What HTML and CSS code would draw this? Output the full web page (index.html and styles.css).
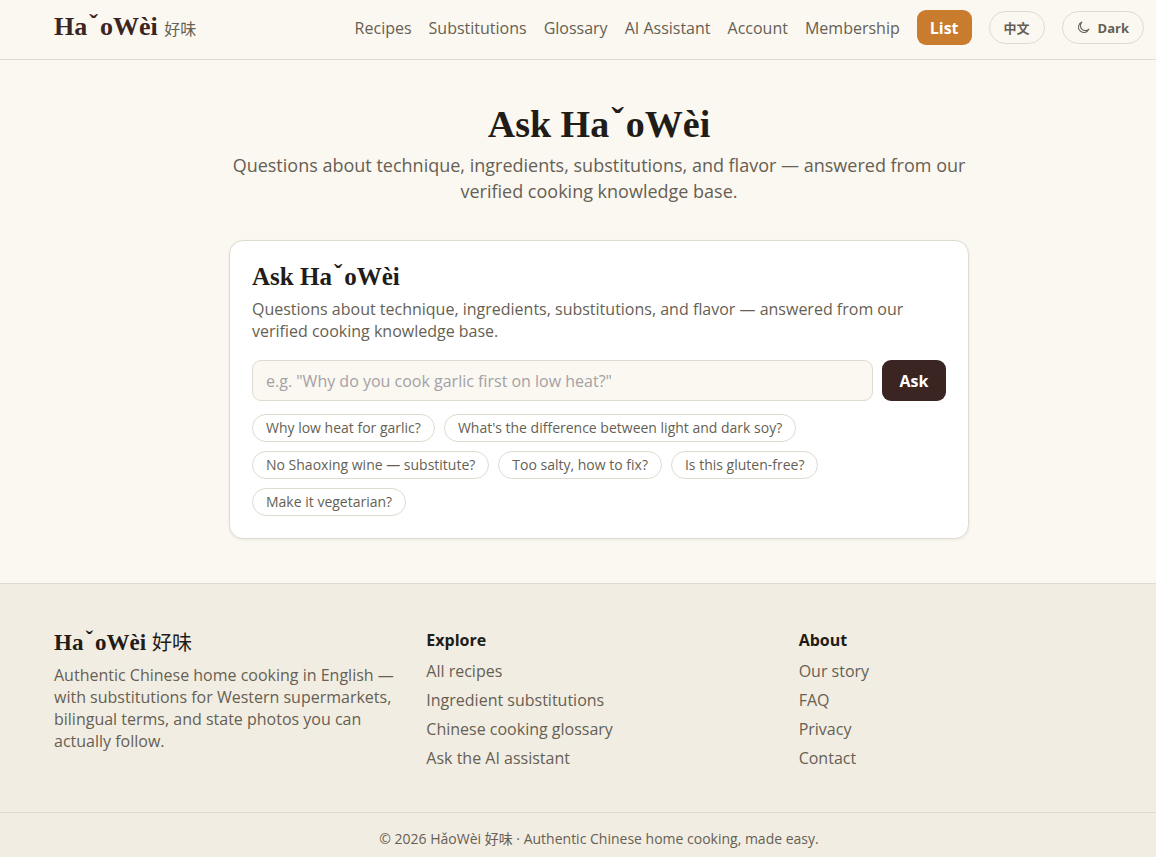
FILE: index.html
```html
<!DOCTYPE html>
<html lang="en">
<head>
  <meta charset="UTF-8" />
  <meta name="viewport" content="width=device-width, initial-scale=1" />
  <title>Ask HǎoWèi</title>
  <link rel="stylesheet" href="styles.css">
</head>
<body>
  <header class="site-header">
    <div class="container header-inner">
      <a class="brand" href="#">Ha<span class="caron">ˇ</span>oWèi <span class="brand-cn" lang="zh">好味</span></a>
      <nav class="nav">
        <a href="#">Recipes</a>
        <a href="#">Substitutions</a>
        <a href="#">Glossary</a>
        <a href="#">AI Assistant</a>
        <a href="#">Account</a>
        <a href="#">Membership</a>
        <a class="nav-list" href="#">List</a>
        <button class="pill-btn" type="button" lang="zh">中文</button>
        <button class="pill-btn" type="button">
          <svg class="moon" viewBox="0 0 24 24" aria-hidden="true"><path d="M22 15A10 10 0 1 1 9 2a8.5 8.5 0 0 0 13 13z"/></svg>
          Dark
        </button>
      </nav>
    </div>
  </header>

  <main class="container main">
    <div class="hero">
      <h1>Ask Ha<span class="caron">ˇ</span>oWèi</h1>
      <p>Questions about technique, ingredients, substitutions, and flavor — answered from our verified cooking knowledge base.</p>
    </div>

    <section class="card">
      <h2>Ask Ha<span class="caron">ˇ</span>oWèi</h2>
      <p class="card-lead">Questions about technique, ingredients, substitutions, and flavor — answered from our verified cooking knowledge base.</p>
      <form class="ask-form">
        <input class="ask-input" type="text" aria-label="Your question" placeholder='e.g. "Why do you cook garlic first on low heat?"' />
        <button class="ask-btn" type="submit">Ask</button>
      </form>
      <div class="chips">
        <button class="chip" type="button">Why low heat for garlic?</button>
        <button class="chip" type="button">What's the difference between light and dark soy?</button>
        <button class="chip" type="button">No Shaoxing wine — substitute?</button>
        <button class="chip" type="button">Too salty, how to fix?</button>
        <button class="chip" type="button">Is this gluten-free?</button>
        <button class="chip" type="button">Make it vegetarian?</button>
      </div>
    </section>
  </main>

  <footer class="site-footer">
    <div class="container footer-grid">
      <div>
        <h3 class="footer-brand">Ha<span class="caron">ˇ</span>oWèi <span class="footer-cn" lang="zh">好味</span></h3>
        <p class="footer-text">Authentic Chinese home cooking in English — with substitutions for Western supermarkets, bilingual terms, and state photos you can actually follow.</p>
      </div>
      <div>
        <h4>Explore</h4>
        <ul class="footer-links">
          <li><a href="#">All recipes</a></li>
          <li><a href="#">Ingredient substitutions</a></li>
          <li><a href="#">Chinese cooking glossary</a></li>
          <li><a href="#">Ask the AI assistant</a></li>
        </ul>
      </div>
      <div>
        <h4>About</h4>
        <ul class="footer-links">
          <li><a href="#">Our story</a></li>
          <li><a href="#">FAQ</a></li>
          <li><a href="#">Privacy</a></li>
          <li><a href="#">Contact</a></li>
        </ul>
      </div>
    </div>
    <div class="footer-bottom">
      <div class="container">© 2026 HǎoWèi <span lang="zh">好味</span> · Authentic Chinese home cooking, made easy.</div>
    </div>
  </footer>
</body>
</html>
```

FILE: styles.css
```css
:root {
  --bg: #fbf8f1;
  --bg-alt: #f2ede2;
  --border: #dedbd0;
  --text: #211c17;
  --muted: #665f54;
  --brand: #3b2523;
  --accent: #c97b2e;
  --sans: "Open Sans", "Noto Sans CJK SC", sans-serif;
  --serif: "Liberation Serif", "Noto Sans CJK SC", serif;
}
* {
  box-sizing: border-box;
  margin: 0;
  padding: 0;
}
body {
  font-family: var(--sans);
  font-size: 16px;
  line-height: 22px;
  color: var(--text);
  background-color: var(--bg);
}
a {
  color: inherit;
  text-decoration: none;
}
button,
input {
  font-family: inherit;
}
button {
  cursor: pointer;
}
h1,
h2,
h3 {
  font-family: var(--serif);
  font-weight: 700;
}
.container {
  padding-left: 54px;
  padding-right: 12px;
}
.caron {
  padding: 0 2px;
  line-height: 0;
  vertical-align: 3px;
}

/* Header */
.site-header {
  border-bottom: 1px solid var(--border);
}
.header-inner {
  display: flex;
  align-items: center;
  justify-content: space-between;
  height: 59px;
  padding-bottom: 4px;
}
.brand {
  font-family: var(--serif);
  font-size: 26px;
  font-weight: 700;
  line-height: 32px;
  color: var(--brand);
  white-space: nowrap;
}
.brand-cn {
  font-family: var(--sans);
  font-size: 16px;
  font-weight: 400;
  color: var(--muted);
}
.nav {
  display: flex;
  align-items: center;
  gap: 17px;
  color: var(--muted);
  white-space: nowrap;
}
.nav-list {
  padding: 7px 13px 6px;
  border-radius: 9px;
  background-color: var(--accent);
  color: #fff;
  font-weight: 700;
}
.pill-btn {
  display: flex;
  align-items: center;
  gap: 8px;
  height: 33px;
  padding: 0 14px;
  border: 1px solid var(--border);
  border-radius: 17px;
  background-color: transparent;
  color: var(--muted);
  font-size: 13px;
  font-weight: 700;
}
.moon {
  width: 13px;
  height: 13px;
  fill: none;
  stroke: currentColor;
  stroke-width: 2;
  stroke-linejoin: round;
}

/* Ask page */
.main {
  padding-top: 44px;
  padding-bottom: 44px;
}
.hero {
  max-width: 740px;
  margin: 0 auto 36px;
  text-align: center;
}
.hero h1 {
  margin-bottom: 8px;
  font-size: 38px;
  line-height: 40px;
}
.hero p {
  font-size: 18px;
  line-height: 26px;
  color: var(--muted);
}
.card {
  max-width: 740px;
  margin: 0 auto;
  padding: 22px;
  border: 1px solid var(--border);
  border-radius: 14px;
  background-color: #fff;
  box-shadow: 0 1px 3px rgba(59, 37, 35, 0.08);
}
.card h2 {
  margin-bottom: 7px;
  font-size: 25px;
  line-height: 28px;
}
.card-lead {
  margin-bottom: 18px;
  color: var(--muted);
}
.ask-form {
  display: flex;
  gap: 9px;
  margin-bottom: 13px;
}
.ask-input {
  flex: 1;
  min-width: 0;
  height: 41px;
  padding: 0 13px;
  border: 1px solid var(--border);
  border-radius: 9px;
  background-color: var(--bg);
  color: var(--text);
  font-size: 16px;
}
.ask-input::placeholder {
  color: #a3a1a6;
}
.ask-btn {
  width: 64px;
  border: none;
  border-radius: 9px;
  background-color: var(--brand);
  color: #fff;
  font-size: 16px;
  font-weight: 700;
}
.chips {
  display: flex;
  flex-wrap: wrap;
  gap: 9px;
}
.chip {
  padding: 4px 13px;
  border: 1px solid var(--border);
  border-radius: 15px;
  background-color: #fff;
  color: var(--muted);
  font-size: 14px;
  line-height: 18px;
}

/* Footer */
.site-footer {
  border-top: 1px solid var(--border);
  background-color: var(--bg-alt);
}
.footer-grid {
  display: grid;
  grid-template-columns: repeat(3, 1fr);
  gap: 27px;
  padding-top: 45px;
  padding-bottom: 43px;
  color: var(--muted);
}
.footer-brand {
  margin-bottom: 7px;
  font-size: 23px;
  line-height: 28px;
  color: var(--text);
}
.footer-cn {
  font-size: 20px;
  font-weight: 400;
}
.footer-grid h4 {
  margin-bottom: 9px;
  font-size: 16px;
  color: var(--text);
}
.footer-links {
  display: flex;
  flex-direction: column;
  gap: 7px;
  list-style: none;
}
.footer-bottom {
  padding: 15px 0 8px;
  border-top: 1px solid var(--border);
  color: var(--muted);
  font-size: 14px;
  text-align: center;
}
```
